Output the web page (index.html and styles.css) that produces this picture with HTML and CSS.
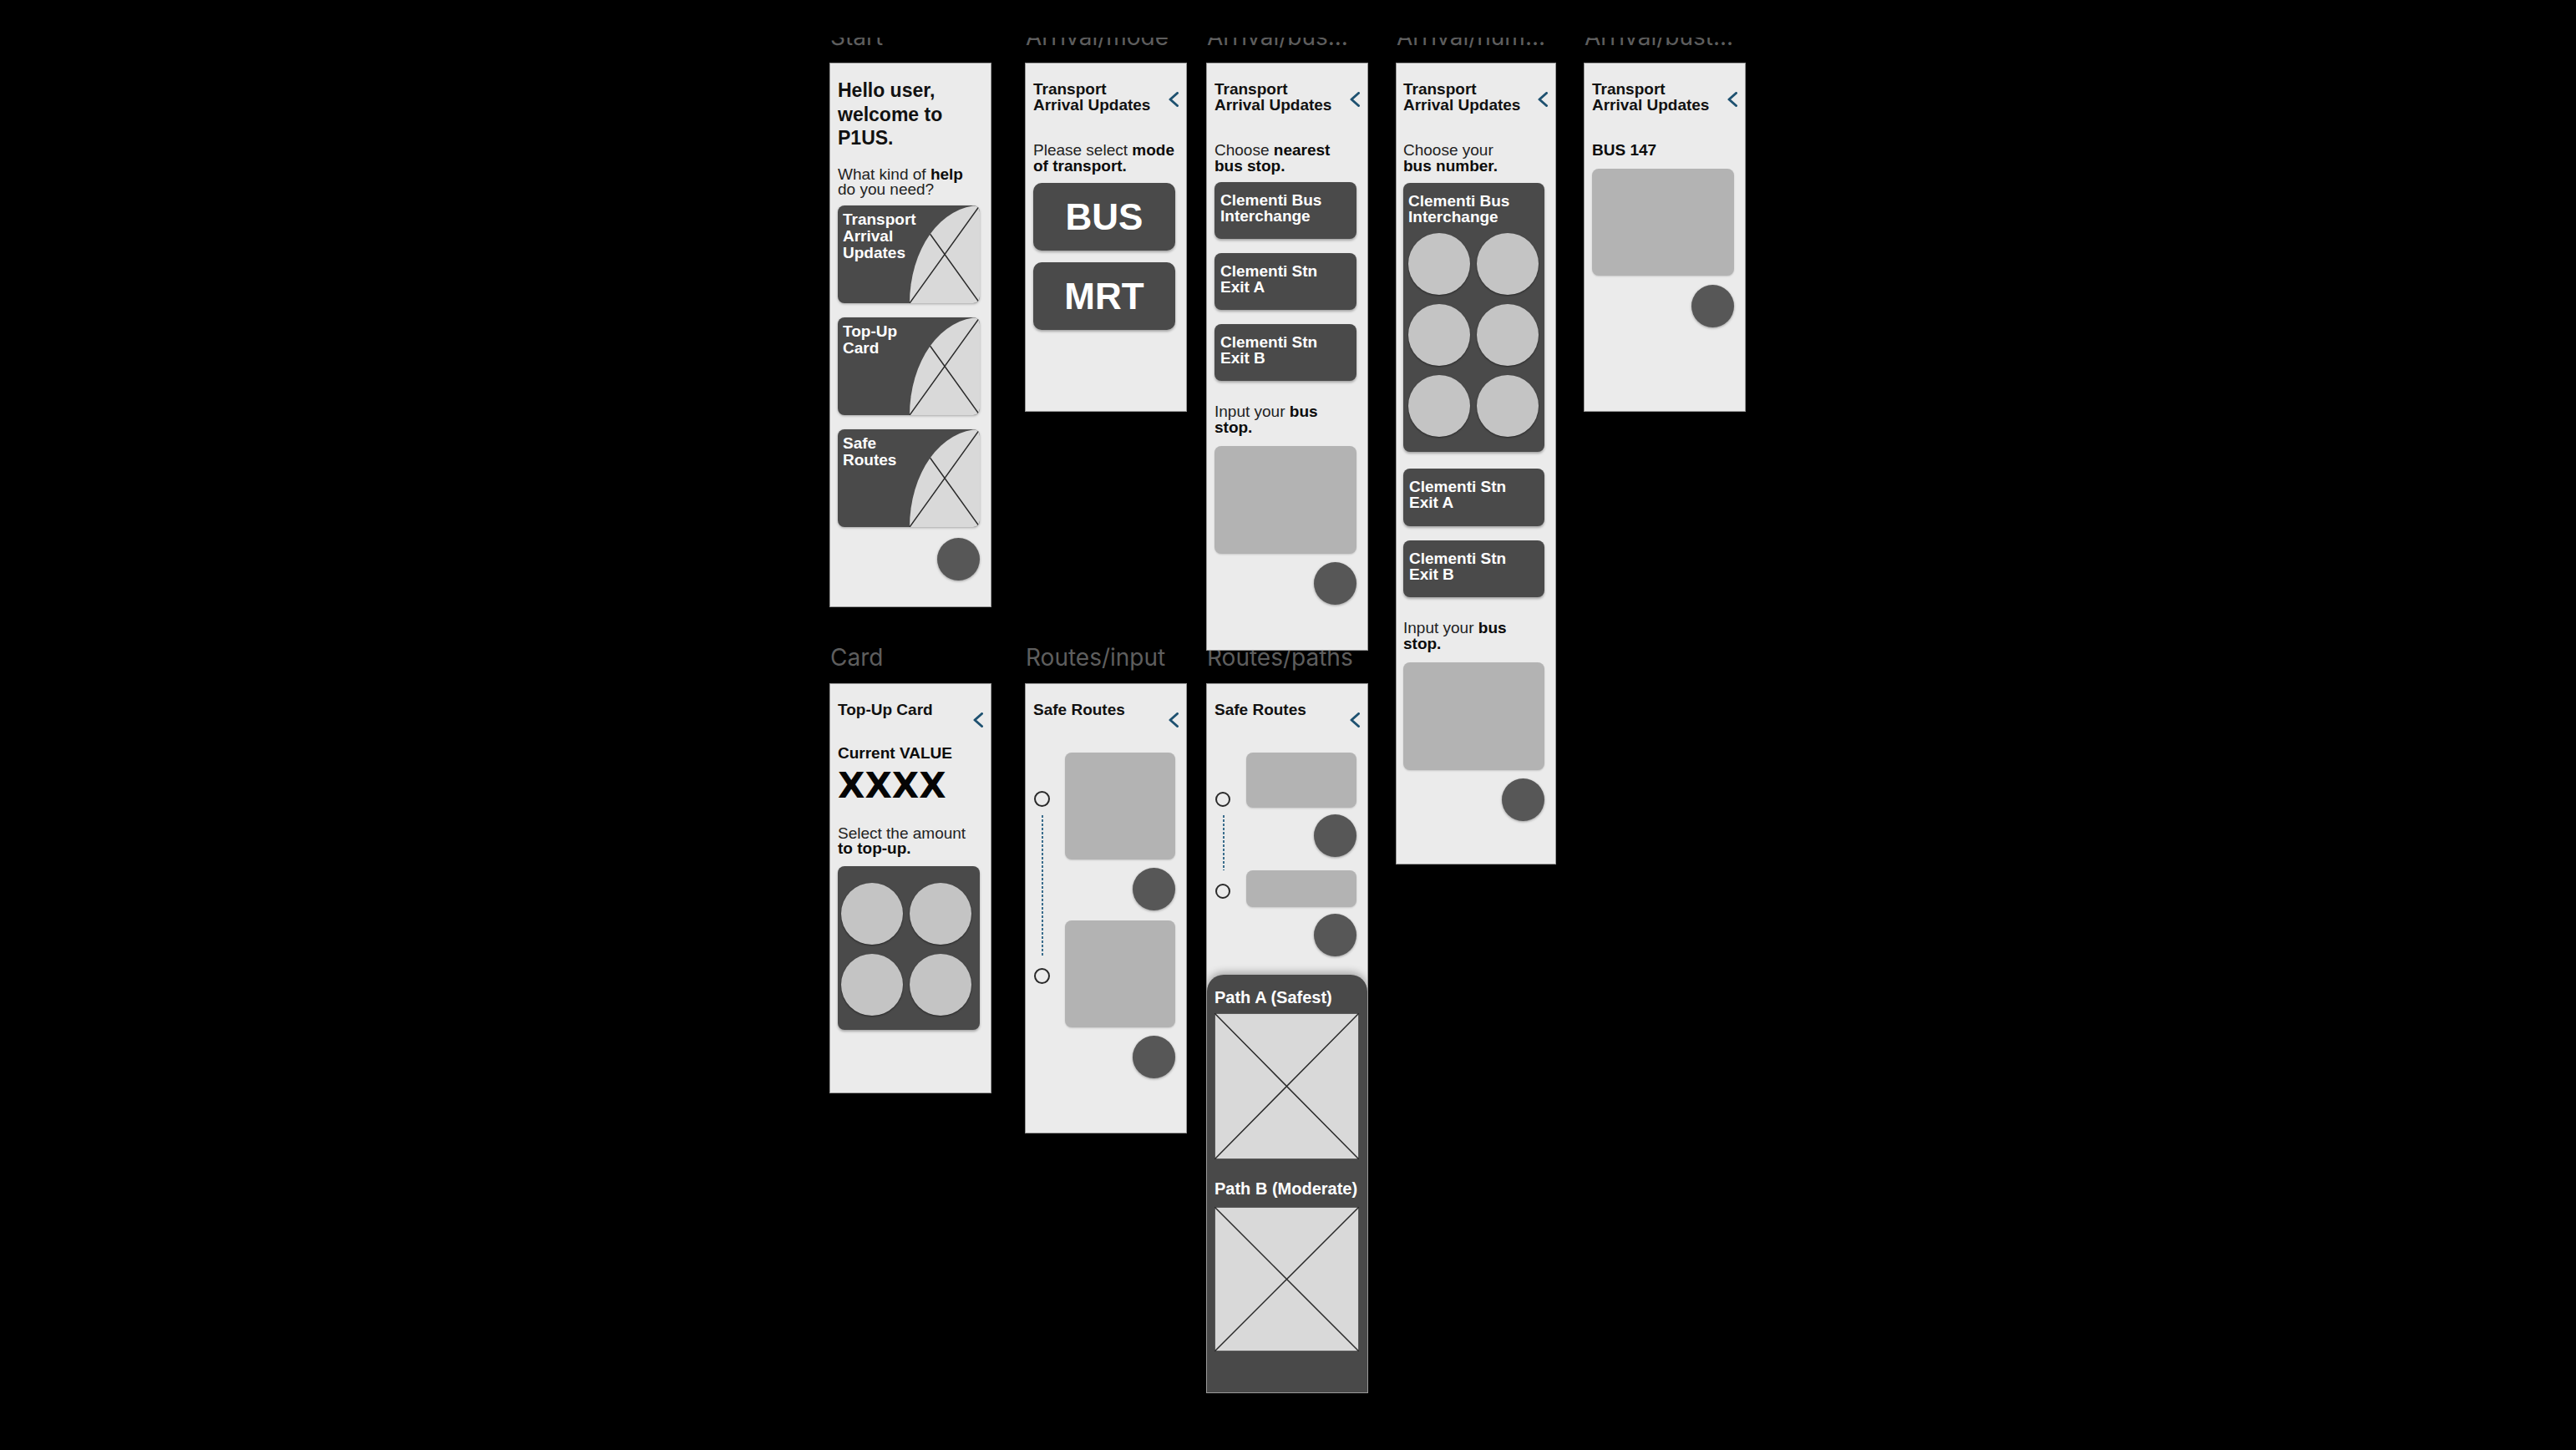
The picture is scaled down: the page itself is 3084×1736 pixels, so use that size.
FILE: index.html
```html
<!DOCTYPE html>
<html lang="en">
<head>
<meta charset="utf-8">
<title>P1US wireframes</title>
<link rel="stylesheet" href="styles.css">
</head>
<body>
<div class="topmask"></div>
<main class="canvas">

  <!-- Start -->
  <section class="board row1 b-start">
    <div class="label">Start</div>
    <div class="frame f-start">
      <h1 class="hello">Hello user,<br>welcome to<br>P1US.</h1>
      <p class="txt q">What kind of <b>help</b><br>do you need?</p>
      <div class="cards">
        <div class="card">
          <span class="card-t">Transport<br>Arrival<br>Updates</span>
          <svg class="card-img" width="84" height="117" viewBox="0 0 84 117"><path d="M0 117A84 117 0 0 1 84 0V117Z" fill="#d9d9d9"/><path d="M84 0L0 117M24.6 34.3L84 117" stroke="#2b2b2b" stroke-width="1.5" fill="none"/></svg>
        </div>
        <div class="card">
          <span class="card-t">Top-Up<br>Card</span>
          <svg class="card-img" width="84" height="117" viewBox="0 0 84 117"><path d="M0 117A84 117 0 0 1 84 0V117Z" fill="#d9d9d9"/><path d="M84 0L0 117M24.6 34.3L84 117" stroke="#2b2b2b" stroke-width="1.5" fill="none"/></svg>
        </div>
        <div class="card">
          <span class="card-t">Safe<br>Routes</span>
          <svg class="card-img" width="84" height="117" viewBox="0 0 84 117"><path d="M0 117A84 117 0 0 1 84 0V117Z" fill="#d9d9d9"/><path d="M84 0L0 117M24.6 34.3L84 117" stroke="#2b2b2b" stroke-width="1.5" fill="none"/></svg>
        </div>
      </div>
      <div class="fab fab-start"></div>
    </div>
  </section>

  <!-- Arrival/mode -->
  <section class="board row1 b-mode">
    <div class="label">Arrival/mode</div>
    <div class="frame f-mode">
      <h2 class="title t-trans">Transport<br>Arrival Updates</h2>
      <svg class="back" width="14" height="18" viewBox="0 0 14 18"><path d="M11.5 1.5L3 9l8.5 7.5" fill="none" stroke="#1e5170" stroke-width="3" stroke-linecap="round" stroke-linejoin="round"/></svg>
      <p class="txt">Please select <b>mode</b><br><b>of transport.</b></p>
      <div class="bigbtn bb1">BUS</div>
      <div class="bigbtn bb2">MRT</div>
    </div>
  </section>

  <!-- Arrival/bus -->
  <section class="board row1 b-bus">
    <div class="label">Arrival/bus...</div>
    <div class="frame f-bus">
      <h2 class="title t-trans">Transport<br>Arrival Updates</h2>
      <svg class="back" width="14" height="18" viewBox="0 0 14 18"><path d="M11.5 1.5L3 9l8.5 7.5" fill="none" stroke="#1e5170" stroke-width="3" stroke-linecap="round" stroke-linejoin="round"/></svg>
      <p class="txt">Choose <b>nearest</b><br><b>bus stop.</b></p>
      <div class="stop stop-first">Clementi Bus<br>Interchange</div>
      <div class="stop">Clementi Stn<br>Exit A</div>
      <div class="stop">Clementi Stn<br>Exit B</div>
      <p class="txt input-q">Input your <b>bus</b><br><b>stop.</b></p>
      <div class="gbox gbox-input"></div>
      <div class="fab fab-10"></div>
    </div>
  </section>

  <!-- Arrival/num -->
  <section class="board row1 b-num">
    <div class="label">Arrival/num...</div>
    <div class="frame f-num">
      <h2 class="title t-trans">Transport<br>Arrival Updates</h2>
      <svg class="back" width="14" height="18" viewBox="0 0 14 18"><path d="M11.5 1.5L3 9l8.5 7.5" fill="none" stroke="#1e5170" stroke-width="3" stroke-linecap="round" stroke-linejoin="round"/></svg>
      <p class="txt">Choose your<br><b>bus number.</b></p>
      <div class="numbox">
        <div class="numbox-t">Clementi Bus<br>Interchange</div>
        <div class="circles circles-num">
          <span class="circle"></span><span class="circle"></span>
          <span class="circle"></span><span class="circle"></span>
          <span class="circle"></span><span class="circle"></span>
        </div>
      </div>
      <div class="stop stop-after-box">Clementi Stn<br>Exit A</div>
      <div class="stop">Clementi Stn<br>Exit B</div>
      <p class="txt input-q">Input your <b>bus</b><br><b>stop.</b></p>
      <div class="gbox gbox-input"></div>
      <div class="fab fab-10"></div>
    </div>
  </section>

  <!-- Arrival/bust -->
  <section class="board row1 b-bust">
    <div class="label">Arrival/bust...</div>
    <div class="frame f-bust">
      <h2 class="title t-trans">Transport<br>Arrival Updates</h2>
      <svg class="back" width="14" height="18" viewBox="0 0 14 18"><path d="M11.5 1.5L3 9l8.5 7.5" fill="none" stroke="#1e5170" stroke-width="3" stroke-linecap="round" stroke-linejoin="round"/></svg>
      <p class="txt"><b>BUS 147</b></p>
      <div class="gbox gbox-bus"></div>
      <div class="fab fab-11"></div>
    </div>
  </section>

  <!-- Card -->
  <section class="board row2 b-card">
    <div class="label">Card</div>
    <div class="frame f-card">
      <h2 class="title">Top-Up Card</h2>
      <svg class="back" width="14" height="18" viewBox="0 0 14 18"><path d="M11.5 1.5L3 9l8.5 7.5" fill="none" stroke="#1e5170" stroke-width="3" stroke-linecap="round" stroke-linejoin="round"/></svg>
      <p class="txt cv"><b>Current VALUE</b></p>
      <p class="xxxx">XXXX</p>
      <p class="txt amount">Select the amount<br><b>to top-up.</b></p>
      <div class="topbox">
        <div class="circles">
          <span class="circle"></span><span class="circle"></span>
          <span class="circle"></span><span class="circle"></span>
        </div>
      </div>
    </div>
  </section>

  <!-- Routes/input -->
  <section class="board row2 b-rin">
    <div class="label">Routes/input</div>
    <div class="frame f-rin">
      <h2 class="title">Safe Routes</h2>
      <svg class="back" width="14" height="18" viewBox="0 0 14 18"><path d="M11.5 1.5L3 9l8.5 7.5" fill="none" stroke="#1e5170" stroke-width="3" stroke-linecap="round" stroke-linejoin="round"/></svg>
      <div class="route">
        <div class="tl tl-in">
          <span class="radio"></span>
          <span class="dots"></span>
          <span class="radio radio2"></span>
        </div>
        <div class="stack">
          <div class="gbox g128"></div>
          <div class="fab fab-10"></div>
          <div class="gbox g128 gap12"></div>
          <div class="fab fab-10"></div>
        </div>
      </div>
    </div>
  </section>

  <!-- Routes/paths -->
  <section class="board row2 b-rpath">
    <div class="label">Routes/paths</div>
    <div class="frame f-rpath">
      <h2 class="title">Safe Routes</h2>
      <svg class="back" width="14" height="18" viewBox="0 0 14 18"><path d="M11.5 1.5L3 9l8.5 7.5" fill="none" stroke="#1e5170" stroke-width="3" stroke-linecap="round" stroke-linejoin="round"/></svg>
      <div class="route">
        <div class="tl tl-path">
          <span class="radio"></span>
          <span class="dots"></span>
          <span class="radio radio2"></span>
        </div>
        <div class="stack">
          <div class="gbox g66"></div>
          <div class="fab fab-8"></div>
          <div class="gbox g44"></div>
          <div class="fab fab-8"></div>
        </div>
      </div>
      <div class="panel">
        <div class="ptitle">Path A (Safest)</div>
        <svg class="pimg" width="173" height="175" viewBox="0 0 173 175"><rect x="0.5" y="0.5" width="172" height="174" fill="#d9d9d9" stroke="#5a5a5a"/><path d="M0 0L173 175M173 0L0 175" stroke="#2a2a2a" stroke-width="1.5"/></svg>
        <div class="ptitle ptitle2">Path B (Moderate)</div>
        <svg class="pimg pimg2" width="173" height="173" viewBox="0 0 173 173"><rect x="0.5" y="0.5" width="172" height="172" fill="#d9d9d9" stroke="#5a5a5a"/><path d="M0 0L173 173M173 0L0 173" stroke="#2a2a2a" stroke-width="1.5"/></svg>
      </div>
    </div>
  </section>

</main>
</body>
</html>
```

FILE: styles.css
```css
* { box-sizing: border-box; margin: 0; padding: 0; }

html, body { background: #000; }

body {
  width: 3084px;
  height: 1736px;
  overflow: hidden;
  font-family: "Liberation Sans", Arial, sans-serif;
  color: #1a1a1a;
}

.topmask {
  position: fixed;
  top: 0;
  left: 0;
  width: 100%;
  height: 45px;
  background: #000;
  z-index: 10;
}

.canvas { position: relative; width: 3084px; height: 1736px; }

/* boards on the free canvas */
.board { position: absolute; }
.row1 { z-index: 2; }
.row2 { z-index: 1; }
.b-start { left: 993px; top: 30px; }
.b-mode  { left: 1227px; top: 30px; }
.b-bus   { left: 1444px; top: 30px; }
.b-num   { left: 1671px; top: 30px; }
.b-bust  { left: 1896px; top: 30px; }
.b-card  { left: 993px; top: 773px; }
.b-rin   { left: 1227px; top: 773px; }
.b-rpath { left: 1444px; top: 773px; }

.label {
  font-family: Inter, "Noto Sans", sans-serif;
  font-size: 28px;
  line-height: 28px;
  height: 28px;
  margin-bottom: 17px;
  padding-left: 1px;
  color: #5e5e5e;
  white-space: nowrap;
}

.frame {
  position: relative;
  width: 194px;
  background: #ebebeb;
  border: 1px solid #9a9a9a;
  padding: 21px 13px 0 9px;
  display: flex;
  flex-direction: column;
  overflow: hidden;
}
.f-start { height: 652px; padding-top: 18px; }
.f-mode  { height: 418px; }
.f-bus   { height: 704px; }
.f-num   { height: 960px; width: 192px; padding-left: 8px; }
.f-bust  { height: 418px; }
.f-card  { height: 491px; }
.f-rin   { height: 539px; }
.f-rpath { height: 850px; }

/* text */
.title {
  font-size: 19px;
  line-height: 19px;
  font-weight: 700;
  color: #111;
}
.t-trans { margin-bottom: 35px; }

.back {
  position: absolute;
  top: 34px;
  right: 8px;
}

.txt {
  font-size: 19px;
  line-height: 19px;
  color: #222;
}
.txt b { font-weight: 700; color: #0c0c0c; }

/* start */
.hello {
  font-size: 23px;
  line-height: 28.5px;
  font-weight: 700;
  color: #111;
}
.q { margin-top: 20px; line-height: 18px; }
.cards {
  margin-top: 10px;
  display: flex;
  flex-direction: column;
  gap: 17px;
}
.card {
  position: relative;
  height: 117px;
  border-radius: 8px;
  background: #4a4a4a;
  overflow: hidden;
  padding: 7px 6px;
  color: #fff;
  font-size: 19px;
  line-height: 20px;
  font-weight: 700;
  box-shadow: 0 1px 3px rgba(0, 0, 0, 0.3);
}
.card-t { position: relative; z-index: 1; display: block; }
.card-img { position: absolute; right: 0; top: 0; }

/* floating round buttons */
.fab {
  width: 51px;
  height: 51px;
  border-radius: 50%;
  background: #575757;
  align-self: flex-end;
  box-shadow: 0 1px 3px rgba(0, 0, 0, 0.35);
  flex-shrink: 0;
}
.fab-start { margin-top: 13px; }
.fab-10 { margin-top: 10px; }
.fab-11 { margin-top: 11px; }
.fab-8 { margin-top: 8px; }

/* mode */
.bigbtn {
  height: 81px;
  border-radius: 10px;
  background: #4a4a4a;
  color: #fff;
  font-size: 44px;
  line-height: 44px;
  font-weight: 700;
  display: flex;
  align-items: center;
  justify-content: center;
  box-shadow: 0 2px 3px rgba(0, 0, 0, 0.3);
}
.bb1 { margin-top: 11px; }
.bb2 { margin-top: 14px; }

/* stops */
.stop {
  height: 68px;
  margin-top: 17px;
  border-radius: 8px;
  background: #4a4a4a;
  color: #fff;
  font-size: 19px;
  line-height: 19px;
  font-weight: 700;
  padding: 12px 7px;
  box-shadow: 0 2px 3px rgba(0, 0, 0, 0.3);
  flex-shrink: 0;
}
.stop-first { margin-top: 10px; }
.stop-after-box { margin-top: 20px; height: 69px; }
.input-q { margin-top: 27px; }

.gbox {
  background: #b3b3b3;
  border-radius: 8px;
  box-shadow: 0 1px 2px rgba(0, 0, 0, 0.15);
  flex-shrink: 0;
}
.gbox-input { height: 129px; margin-top: 13px; }
.gbox-bus { height: 128px; margin-top: 13px; }

/* number box */
.numbox {
  margin-top: 11px;
  background: #4a4a4a;
  border-radius: 8px;
  padding: 12px 6px 18px 6px;
  color: #fff;
  box-shadow: 0 2px 3px rgba(0, 0, 0, 0.3);
}
.numbox-t {
  font-size: 19px;
  line-height: 19px;
  font-weight: 700;
}
.circles {
  display: grid;
  grid-template-columns: 74px 74px;
  column-gap: 8px;
  row-gap: 11px;
}
.circles-num { margin-top: 10px; }
.circle {
  width: 74px;
  height: 74px;
  border-radius: 50%;
  background: #c4c4c4;
  box-shadow: 0 1px 2px rgba(0, 0, 0, 0.5);
}

/* card */
.cv { margin-top: 33px; }
.xxxx {
  margin-top: 9px;
  font-family: "DejaVu Sans", sans-serif;
  font-weight: 700;
  font-size: 42px;
  line-height: 42px;
  color: #050505;
}
.amount { margin-top: 27px; line-height: 18px; }
.topbox {
  margin-top: 12px;
  height: 196px;
  background: #4a4a4a;
  border-radius: 8px;
  padding: 20px 8px 0 4px;
  box-shadow: 0 2px 3px rgba(0, 0, 0, 0.3);
}

/* routes */
.route {
  display: flex;
  margin-top: 42px;
}
.tl {
  width: 38px;
  display: flex;
  flex-direction: column;
  align-items: flex-start;
  flex-shrink: 0;
}
.tl-in { padding-top: 46px; }
.tl-path { padding-top: 47px; }
.radio {
  width: 19px;
  height: 19px;
  border: 2px solid #2a2a2a;
  border-radius: 50%;
  margin-left: 1px;
}
.tl-path .radio { width: 18px; height: 18px; }
.dots {
  width: 2px;
  margin-left: 10px;
  margin-top: 10px;
  background: repeating-linear-gradient(to bottom, #3a6d8c 0, #3a6d8c 3px, transparent 3px, transparent 5px);
}
.tl-in .dots { height: 170px; }
.tl-in .radio2 { margin-top: 13px; }
.tl-path .dots { height: 66px; }
.tl-path .radio2 { margin-top: 16px; }

.stack {
  width: 132px;
  display: flex;
  flex-direction: column;
}
.g128 { height: 128px; }
.gap12 { margin-top: 12px; }
.g66 { height: 66px; }
.g44 { height: 44px; margin-top: 16px; }

/* path panel */
.panel {
  flex: 1;
  margin: 22px -13px 0 -9px;
  background: #494949;
  border-radius: 20px 20px 0 0;
  padding: 17px 10px 0 9px;
  box-shadow: 0 -3px 10px rgba(0, 0, 0, 0.3);
}
.ptitle {
  font-size: 20px;
  line-height: 20px;
  font-weight: 700;
  color: #fff;
}
.ptitle2 { margin-top: 25px; }
.pimg { display: block; margin-top: 9px; }
.pimg2 { margin-top: 12px; }
```
